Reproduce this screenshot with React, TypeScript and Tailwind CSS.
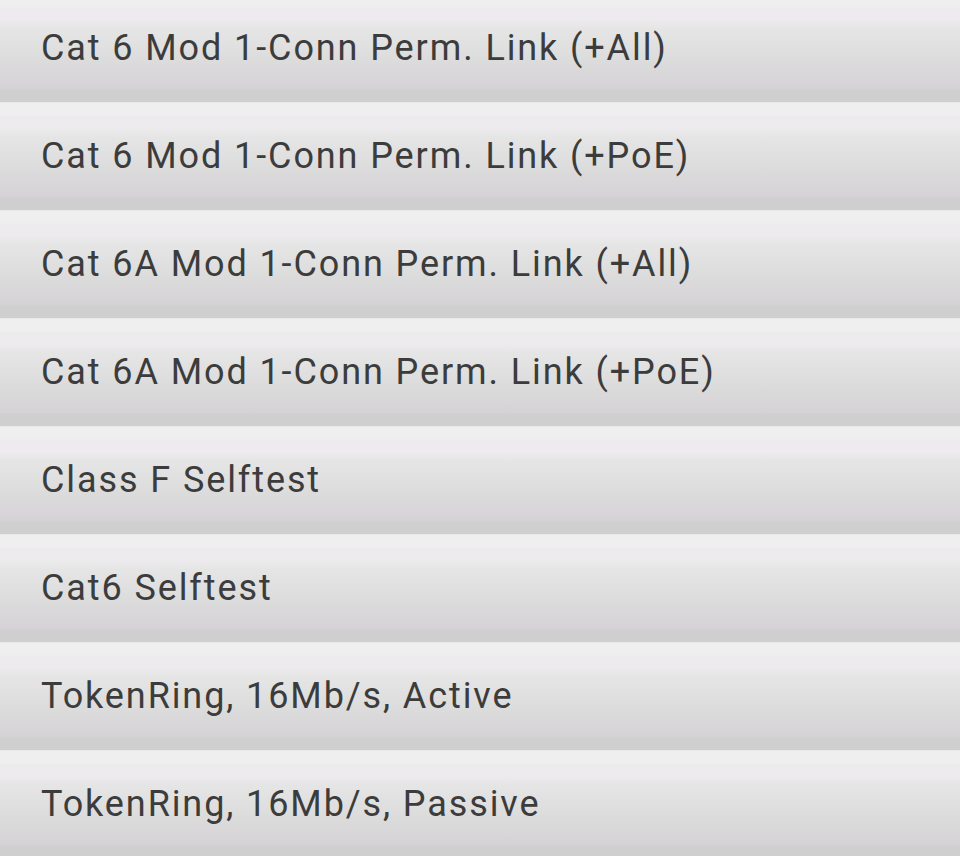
const items = [
  'Cat 6 Mod 1-Conn Perm. Link (+All)',
  'Cat 6 Mod 1-Conn Perm. Link (+PoE)',
  'Cat 6A Mod 1-Conn Perm. Link (+All)',
  'Cat 6A Mod 1-Conn Perm. Link (+PoE)',
  'Class F Selftest',
  'Cat6 Selftest',
  'TokenRing, 16Mb/s, Active',
  'TokenRing, 16Mb/s, Passive',
];

export default function App() {
  return (
    <div className="h-[856px] w-[960px] overflow-hidden bg-[#cfcfcf] font-['Roboto',sans-serif]">
      {/* list is scrolled a few px past the first row's top */}
      <ul className="-mt-[6px] flex flex-col">
        {items.map((label) => (
          <li
            key={label}
            className="flex h-[108px] items-center bg-[linear-gradient(to_bottom,#e4e4e4_0px,#efefef_1px,#efefef_13px,#eeebee_14px,#eeebee_25px,#e5e5e5_36px,#dedede_60px,#d8d6d8_84px,#d5d2d5_95px,#cfcfcf_96px,#cfcfcf_100%)] pl-[41px] text-[36px] tracking-[1.9px] text-[#3c3c3c]"
          >
            {label}
          </li>
        ))}
      </ul>
    </div>
  );
}
